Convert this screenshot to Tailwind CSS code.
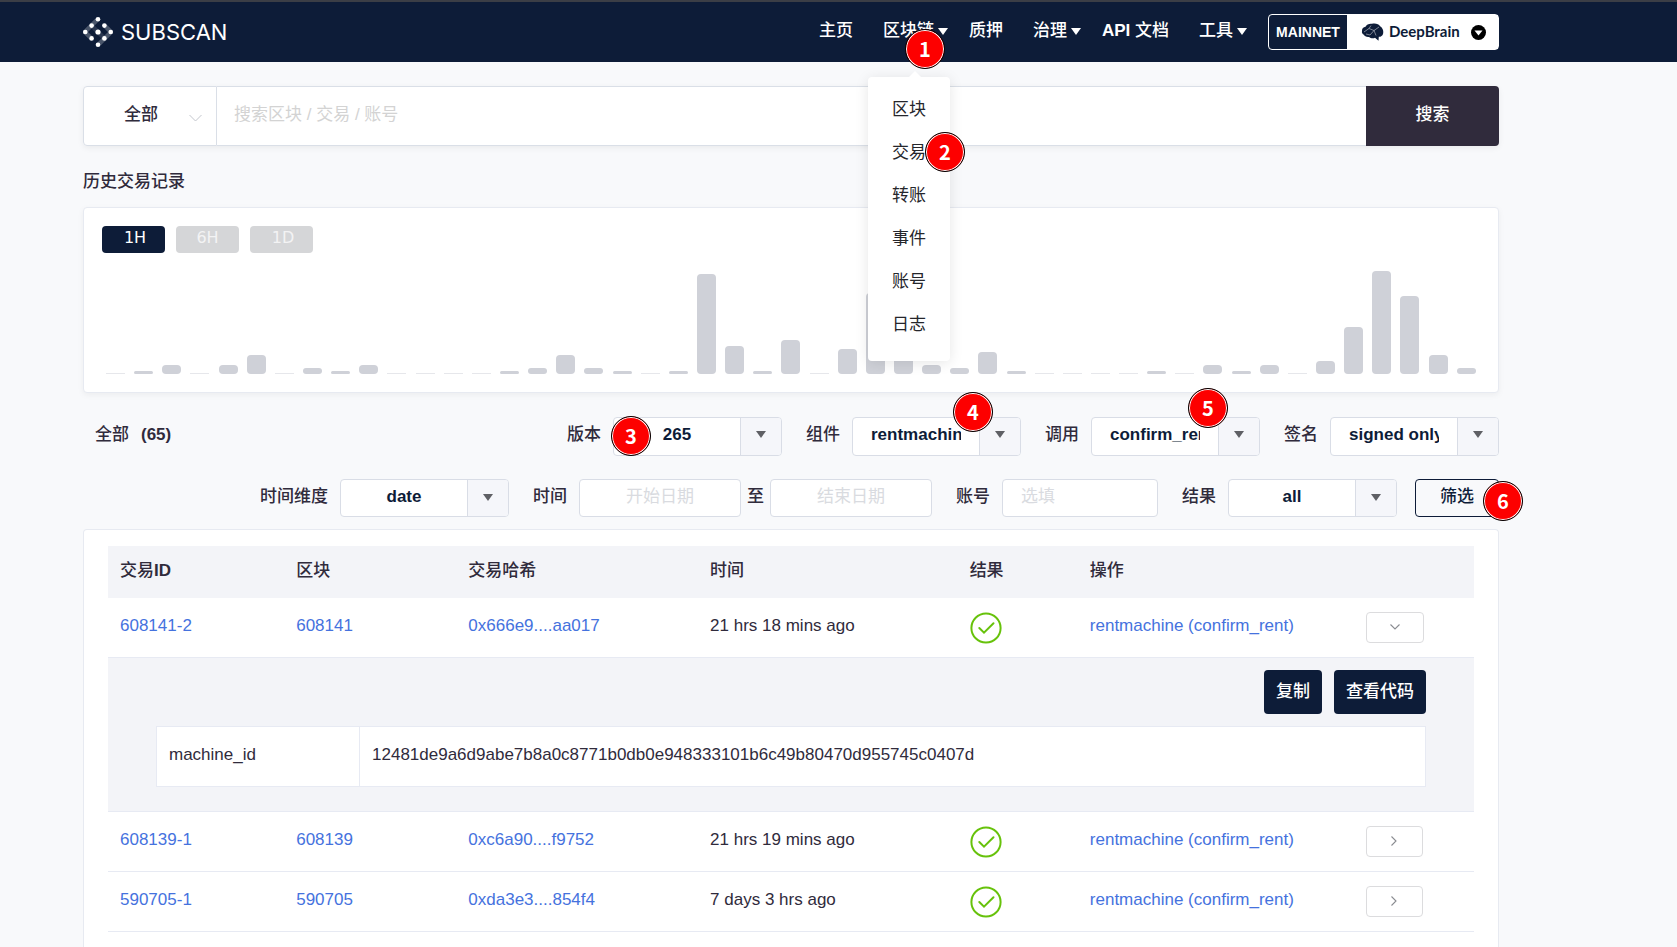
<!DOCTYPE html>
<html lang="zh-CN">
<head>
<meta charset="utf-8">
<title>Subscan</title>
<script src="https://cdn.jsdelivr.net/npm/@tailwindcss/browser@4"></script>
</head>
<body class="flex min-h-screen flex-col bg-[#f8f9fb] text-[17px] leading-6 text-[#302b3c] [font-family:'Liberation_Sans','Noto_Sans_CJK_SC',sans-serif]">

<svg class="hidden">
  <symbol id="caret" viewBox="0 0 10 7"><path d="M0 0H10L5 7Z" fill="currentColor"/></symbol>
  <symbol id="ok" viewBox="0 0 32 32"><circle cx="16" cy="16" r="14.6" fill="none" stroke="#67c20b" stroke-width="2"/><path d="M9.3 16L14 20.6L23.5 11.3" fill="none" stroke="#67c20b" stroke-width="2" stroke-linecap="round"/></symbol>
  <symbol id="right" viewBox="0 0 8 12"><path d="M1.5 1.5L6 6L1.5 10.5" fill="none" stroke="#8a8c91" stroke-width="1.1"/></symbol>
  <symbol id="down" viewBox="0 0 12 8"><path d="M1.5 1.5L6 6L10.5 1.5" fill="none" stroke="#8a8c91" stroke-width="1.1"/></symbol>
</svg>

<header class="flex h-[62px] items-center justify-between border-t-2 border-[#3b3e46] bg-[#0d1c38] pr-[178px] pl-[83px] text-white">
  <a href="#" class="flex items-center gap-2">
    <svg class="h-[30px] w-[30px]" viewBox="0 0 30 30">
      <g stroke="#ffffff" stroke-opacity=".25" stroke-width="4.5" fill="none">
        <path d="M15 2L2 15L8.500 21.500"/><path d="M8.500 8.500L21.500 21.500" stroke-opacity=".12"/><path d="M15 28L28 15L21.500 8.500"/>
      </g>
      <g fill="#fff"><circle cx="15" cy="2.300" r="2.300"/><circle cx="8.600" cy="8.600" r="2.300"/><circle cx="21.400" cy="8.600" r="2.300"/><circle cx="2.300" cy="15" r="2.300"/><circle cx="15" cy="15" r="2.600"/><circle cx="27.700" cy="15" r="2.300"/><circle cx="8.600" cy="21.400" r="2.300"/><circle cx="21.400" cy="21.400" r="2.300"/><circle cx="15" cy="27.700" r="2.300"/></g>
    </svg>
    <span class="text-[22px] [font-family:Inter,sans-serif]">SUBSCAN</span>
  </a>
  <div class="flex items-center gap-[21px]">
    <nav class="flex items-center gap-[21px] pb-0.5 font-medium">
      <a href="#" class="pr-[9px]">主页</a>
      <div class="relative">
        <a href="#" class="flex items-center gap-1">区块链<svg class="h-[7px] w-[10px]"><use href="#caret"/></svg></a>
        <ul class="absolute top-[58px] left-[-15px] z-10 w-[82px] rounded bg-white pt-[11px] pb-[15px] font-normal text-[#25262b] shadow-[0_2px_14px_rgba(0,0,0,0.1)]">
          <li class="absolute top-[-6px] left-[41px] border-x-6 border-b-6 border-x-transparent border-b-white"></li>
          <li><a href="#" class="block pl-6 leading-[43px]">区块</a></li>
          <li class="relative"><a href="#" class="block pl-6 leading-[43px]">交易</a>
            <span class="absolute top-[1px] left-[57px] flex h-10 w-10 items-center justify-center rounded-full border border-black bg-[#fd0000] text-xl font-bold text-white inset-ring inset-ring-white [font-family:'Noto_Sans_CJK_SC',sans-serif]">2</span></li>
          <li><a href="#" class="block pl-6 leading-[43px]">转账</a></li>
          <li><a href="#" class="block pl-6 leading-[43px]">事件</a></li>
          <li><a href="#" class="block pl-6 leading-[43px]">账号</a></li>
          <li><a href="#" class="block pl-6 leading-[43px]">日志</a></li>
        </ul>
        <span class="absolute top-[10px] left-[22px] z-20 flex h-10 w-10 items-center justify-center rounded-full border border-black bg-[#fd0000] text-xl font-bold text-white inset-ring inset-ring-white [font-family:'Noto_Sans_CJK_SC',sans-serif]">1</span>
      </div>
      <a href="#" class="pr-[9px]">质押</a>
      <a href="#" class="flex items-center gap-1">治理<svg class="h-[7px] w-[10px]"><use href="#caret"/></svg></a>
      <a href="#" class="pr-[9px]"><b>API</b> 文档</a>
      <a href="#" class="flex items-center gap-1">工具<svg class="h-[7px] w-[10px]"><use href="#caret"/></svg></a>
    </nav>
    <button class="flex h-9 items-center rounded-sm border border-white text-sm font-bold">
      <span class="w-[78px] text-center">MAINNET</span>
      <span class="flex h-full w-[151px] items-center bg-white pl-[14px] text-[#0d1c38]">
        <svg class="h-[18px] w-[23px]" viewBox="0 0 23 18">
          <path d="M1 8C0.800 5.500 2.500 4 4.500 3.800C5.500 1.500 8.500 0.300 11 0.800C14 0 18 0.800 19 3.200C21.500 4.500 23 8 22 11C21.500 13 19.500 14 17.800 13.800L17.500 17.800L14 14.800C12 15.800 9.500 15.300 8 14C5.500 14.300 3.500 13.300 3 11.800C1.500 11.300 0.500 9.500 1 8Z" fill="#0d1c38"/>
          <path d="M3 9L8 5.500L13 7.500L18 4M8 5.500L10 2.500M13 7.500L15 12.500M13 7.500L9 12M5 11L9 12" fill="none" stroke="#fff" stroke-opacity=".75" stroke-width=".6"/>
        </svg>
        <span class="ml-[5px] w-[70px] text-[15px] [font-family:Lato,sans-serif]">DeepBrain</span>
        <svg class="ml-3 h-[15px] w-[15px]" viewBox="0 0 15 15"><circle cx="7.500" cy="7.500" r="7.500" fill="#000"/><path d="M3.500 5.500H11.500L7.500 10.500Z" fill="#fff"/></svg>
      </span>
    </button>
  </div>
</header>

<main class="flex flex-1 flex-col pr-[178px] pl-[83px]">
  <form class="mt-6 flex h-[60px] rounded shadow-[0_2px_6px_rgba(0,0,0,0.06)]">
    <div class="relative w-[134px] rounded-l border border-[#dadfe7] bg-white">
      <select aria-label="类型" class="h-full w-full appearance-none pr-[18px] pb-0.5 text-center font-medium"><option>全部</option></select>
      <svg class="pointer-events-none absolute top-[27px] right-[14px] h-2 w-[13px]" viewBox="0 0 13 8"><path d="M.5 1L6.500 7L12.500 1" fill="none" stroke="#c3c6cd"/></svg>
    </div>
    <input aria-label="搜索" placeholder="搜索区块 / 交易 / 账号" class="min-w-0 flex-1 border-y border-[#dadfe7] bg-white px-[17px] pb-0.5 placeholder:text-[#d3d3d3]">
    <button class="w-[133px] rounded-r bg-[#302b3c] pb-0.5 font-medium text-white">搜索</button>
  </form>

  <h1 class="mt-6 font-medium">历史交易记录</h1>
  <section class="mt-[13px] rounded border border-[#e7eaf1] bg-white px-[18px] pt-[18px] pb-[18px] shadow-[0_2px_6px_rgba(0,0,0,0.05)]">
    <div class="flex gap-[11px] text-base text-white [font-family:'DejaVu_Sans',sans-serif]">
      <button class="h-[27px] w-[63px] rounded-sm bg-[#0d1c38] pb-[3px] pl-[3px]">1H</button>
      <button class="h-[27px] w-[63px] rounded-sm bg-[#d5d6d8] pb-[3px] text-[#f3f3f4]">6H</button>
      <button class="h-[27px] w-[63px] rounded-sm bg-[#d5d6d8] pb-[3px] pl-[3px] text-[#f3f3f4]">1D</button>
    </div>
    <div id="bars" class="mt-4 flex h-[105px] items-end justify-between px-1"></div>
  </section>

  <form class="font-medium">
    <div class="mt-6 flex items-center gap-6">
      <div class="flex-1 pb-1 pl-3">全部<b class="ml-3">(65)</b></div>
      <div class="relative flex items-center gap-3"><label for="ver" class="pb-[3px]">版本</label>
        <div class="flex h-[39px] overflow-hidden rounded border border-[#d9dde6] bg-white text-[#0d1c38]"><select id="ver" class="w-[126px] appearance-none px-[18px] pb-[3px] text-center font-bold"><option>265</option></select><span class="flex w-[41px] items-center justify-center border-l border-[#d9dde6] bg-[#f5f6fa] pb-1 text-[#5f6065]"><svg class="h-[7px] w-[10px]"><use href="#caret"/></svg></span></div>
        <span class="absolute top-[-1px] left-[44px] flex h-10 w-10 items-center justify-center rounded-full border border-black bg-[#fd0000] text-xl font-bold text-white inset-ring inset-ring-white [font-family:'Noto_Sans_CJK_SC',sans-serif]">3</span>
      </div>
      <div class="relative flex items-center gap-3"><label for="mod" class="pb-[3px]">组件</label>
        <div class="flex h-[39px] overflow-hidden rounded border border-[#d9dde6] bg-white text-[#0d1c38]"><select id="mod" class="w-[126px] appearance-none px-[18px] pb-[3px] text-center font-bold"><option>rentmachine</option></select><span class="flex w-[41px] items-center justify-center border-l border-[#d9dde6] bg-[#f5f6fa] pb-1 text-[#5f6065]"><svg class="h-[7px] w-[10px]"><use href="#caret"/></svg></span></div>
        <span class="absolute top-[-25px] left-[147px] flex h-10 w-10 items-center justify-center rounded-full border border-black bg-[#fd0000] text-xl font-bold text-white inset-ring inset-ring-white [font-family:'Noto_Sans_CJK_SC',sans-serif]">4</span>
      </div>
      <div class="relative flex items-center gap-3"><label for="call" class="pb-[3px]">调用</label>
        <div class="flex h-[39px] overflow-hidden rounded border border-[#d9dde6] bg-white text-[#0d1c38]"><select id="call" class="w-[126px] appearance-none px-[18px] pb-[3px] text-center font-bold"><option>confirm_rent</option></select><span class="flex w-[41px] items-center justify-center border-l border-[#d9dde6] bg-[#f5f6fa] pb-1 text-[#5f6065]"><svg class="h-[7px] w-[10px]"><use href="#caret"/></svg></span></div>
        <span class="absolute top-[-29px] left-[143px] flex h-10 w-10 items-center justify-center rounded-full border border-black bg-[#fd0000] text-xl font-bold text-white inset-ring inset-ring-white [font-family:'Noto_Sans_CJK_SC',sans-serif]">5</span>
      </div>
      <div class="flex items-center gap-3"><label for="sig" class="pb-[3px]">签名</label>
        <div class="flex h-[39px] overflow-hidden rounded border border-[#d9dde6] bg-white text-[#0d1c38]"><select id="sig" class="w-[126px] appearance-none px-[18px] pb-[3px] text-center font-bold"><option>signed only</option></select><span class="flex w-[41px] items-center justify-center border-l border-[#d9dde6] bg-[#f5f6fa] pb-1 text-[#5f6065]"><svg class="h-[7px] w-[10px]"><use href="#caret"/></svg></span></div>
      </div>
    </div>

    <div class="mt-[23px] flex items-center justify-end gap-6">
      <div class="flex items-center gap-3"><label for="dim" class="pb-0.5">时间维度</label>
        <div class="flex h-[38px] overflow-hidden rounded border border-[#d9dde6] bg-white text-[#0d1c38]"><select id="dim" class="w-[126px] appearance-none px-[18px] pb-0.5 text-center font-bold"><option>date</option></select><span class="flex w-[41px] items-center justify-center border-l border-[#d9dde6] bg-[#f5f6fa] pb-0.5 text-[#5f6065]"><svg class="h-[7px] w-[10px]"><use href="#caret"/></svg></span></div>
      </div>
      <div class="flex items-center"><label for="from" class="mr-3 pb-0.5">时间</label>
        <input id="from" placeholder="开始日期" class="h-[38px] w-[162px] rounded border border-[#d9dde6] bg-white pb-0.5 text-center font-normal placeholder:text-[#d9dbe0]">
        <label for="to" class="px-[6px] pb-0.5">至</label>
        <input id="to" placeholder="结束日期" class="h-[38px] w-[162px] rounded border border-[#d9dde6] bg-white pb-0.5 text-center font-normal placeholder:text-[#d9dbe0]">
      </div>
      <div class="flex items-center gap-3"><label for="acc" class="pb-0.5">账号</label>
        <input id="acc" placeholder="选填" class="h-[38px] w-[156px] rounded border border-[#d9dde6] bg-white px-[18px] pb-0.5 font-normal placeholder:text-[#d9dbe0]">
      </div>
      <div class="flex items-center gap-3"><label for="res" class="pb-0.5">结果</label>
        <div class="flex h-[38px] overflow-hidden rounded border border-[#d9dde6] bg-white text-[#0d1c38]"><select id="res" class="w-[126px] appearance-none px-[18px] pb-0.5 text-center font-bold"><option>all</option></select><span class="flex w-[41px] items-center justify-center border-l border-[#d9dde6] bg-[#f5f6fa] pb-0.5 text-[#5f6065]"><svg class="h-[7px] w-[10px]"><use href="#caret"/></svg></span></div>
      </div>
      <div class="relative -ml-[6px]">
        <button class="block h-[38px] w-[84px] rounded-sm border border-[#0d1c38] pb-[3px] font-medium text-[#0d1c38]">筛选</button>
        <span class="absolute top-[2px] left-[68px] flex h-10 w-10 items-center justify-center rounded-full border border-black bg-[#fd0000] text-xl font-bold text-white inset-ring inset-ring-white [font-family:'Noto_Sans_CJK_SC',sans-serif]">6</span>
      </div>
    </div>
  </form>

  <section class="mt-3 flex-1 rounded-t border border-b-0 border-[#e7eaf1] bg-white px-6 pt-4">
    <table class="w-full table-fixed text-left">
      <colgroup><col class="w-[12.9%]"><col class="w-[12.6%]"><col class="w-[17.7%]"><col class="w-[19%]"><col class="w-[8.8%]"><col class="w-[20.2%]"><col></colgroup>
      <thead class="h-[52px] bg-[#f3f4f8]">
        <tr>
          <th class="px-3 pb-0.5 font-medium">交易<b>ID</b></th><th class="px-3 pb-0.5 font-medium">区块</th><th class="px-3 pb-0.5 font-medium">交易哈希</th><th class="px-3 pb-0.5 font-medium">时间</th><th class="px-3 pb-0.5 font-medium">结果</th><th class="px-3 pb-0.5 font-medium">操作</th><th></th>
        </tr>
      </thead>
      <tbody>
        <tr class="h-[59px] border-b border-[#e7eaf3]">
          <td class="px-3 pb-0.5"><a href="#" class="text-[#4572de]">608141-2</a></td><td class="px-3 pb-0.5"><a href="#" class="text-[#4572de]">608141</a></td><td class="px-3 pb-0.5"><a href="#" class="text-[#4572de]">0x666e9....aa017</a></td><td class="px-3 pb-0.5">21 hrs 18 mins ago</td>
          <td class="px-3 pt-0.5"><svg class="h-8 w-8" role="img" aria-label="成功"><use href="#ok"/></svg></td>
          <td class="px-3 pb-0.5"><a href="#" class="text-[#4572de]">rentmachine (confirm_rent)</a></td>
          <td class="px-3"><button aria-label="收起" class="flex h-[31px] w-[58px] items-center justify-center rounded border border-[#dcdcde]"><svg class="h-2 w-3"><use href="#down"/></svg></button></td>
        </tr>
        <tr class="border-b border-[#e7eaf3] bg-[#f3f4f8]">
          <td colspan="7" class="px-12 pt-3 pb-6">
            <div class="mb-3 flex justify-end gap-3 font-medium text-white">
              <button class="h-11 rounded bg-[#0d1c38] px-3">复制</button>
              <button class="h-11 rounded bg-[#0d1c38] px-3">查看代码</button>
            </div>
            <table class="w-full table-fixed bg-white">
              <tr class="h-[60px]"><th class="w-[16%] border border-[#e7eaf3] px-3 pb-0.5 font-normal">machine_id</th><td class="border border-[#e7eaf3] px-3 pb-0.5">12481de9a6d9abe7b8a0c8771b0db0e948333101b6c49b80470d955745c0407d</td></tr>
            </table>
          </td>
        </tr>
        <tr class="h-[60px] border-b border-[#e7eaf3]">
          <td class="px-3 pb-0.5"><a href="#" class="text-[#4572de]">608139-1</a></td><td class="px-3 pb-0.5"><a href="#" class="text-[#4572de]">608139</a></td><td class="px-3 pb-0.5"><a href="#" class="text-[#4572de]">0xc6a90....f9752</a></td><td class="px-3 pb-0.5">21 hrs 19 mins ago</td>
          <td class="px-3 pt-0.5"><svg class="h-8 w-8" role="img" aria-label="成功"><use href="#ok"/></svg></td>
          <td class="px-3 pb-0.5"><a href="#" class="text-[#4572de]">rentmachine (confirm_rent)</a></td>
          <td class="px-3"><button aria-label="展开" class="flex h-[31px] w-[57px] items-center justify-center rounded border border-[#dcdcde]"><svg class="h-3 w-2"><use href="#right"/></svg></button></td>
        </tr>
        <tr class="h-[60px] border-b border-[#e7eaf3]">
          <td class="px-3 pb-0.5"><a href="#" class="text-[#4572de]">590705-1</a></td><td class="px-3 pb-0.5"><a href="#" class="text-[#4572de]">590705</a></td><td class="px-3 pb-0.5"><a href="#" class="text-[#4572de]">0xda3e3....854f4</a></td><td class="px-3 pb-0.5">7 days 3 hrs ago</td>
          <td class="px-3 pt-0.5"><svg class="h-8 w-8" role="img" aria-label="成功"><use href="#ok"/></svg></td>
          <td class="px-3 pb-0.5"><a href="#" class="text-[#4572de]">rentmachine (confirm_rent)</a></td>
          <td class="px-3"><button aria-label="展开" class="flex h-[31px] w-[57px] items-center justify-center rounded border border-[#dcdcde]"><svg class="h-3 w-2"><use href="#right"/></svg></button></td>
        </tr>
      </tbody>
    </table>
  </section>
</main>

<script>
  const counts = [0,1,3,0,3,6,0,2,1,3,0,0,0,0,1,2,6,2,1,0,1,32,9,1,11,0,8,26,10,3,2,7,1,0,0,0,0,1,0,3,1,3,0,4,15,33,25,6,2];
  const bars = document.getElementById('bars');
  for (const n of counts) {
    const bar = document.createElement('div');
    bar.className = n ? 'w-[19px] rounded bg-[#cfd1d8]' : 'w-[19px] bg-[#e6e7eb]';
    bar.style.height = Math.max(1, Math.round(n * 3.13)) + 'px';
    bars.append(bar);
  }
</script>
</body>
</html>
